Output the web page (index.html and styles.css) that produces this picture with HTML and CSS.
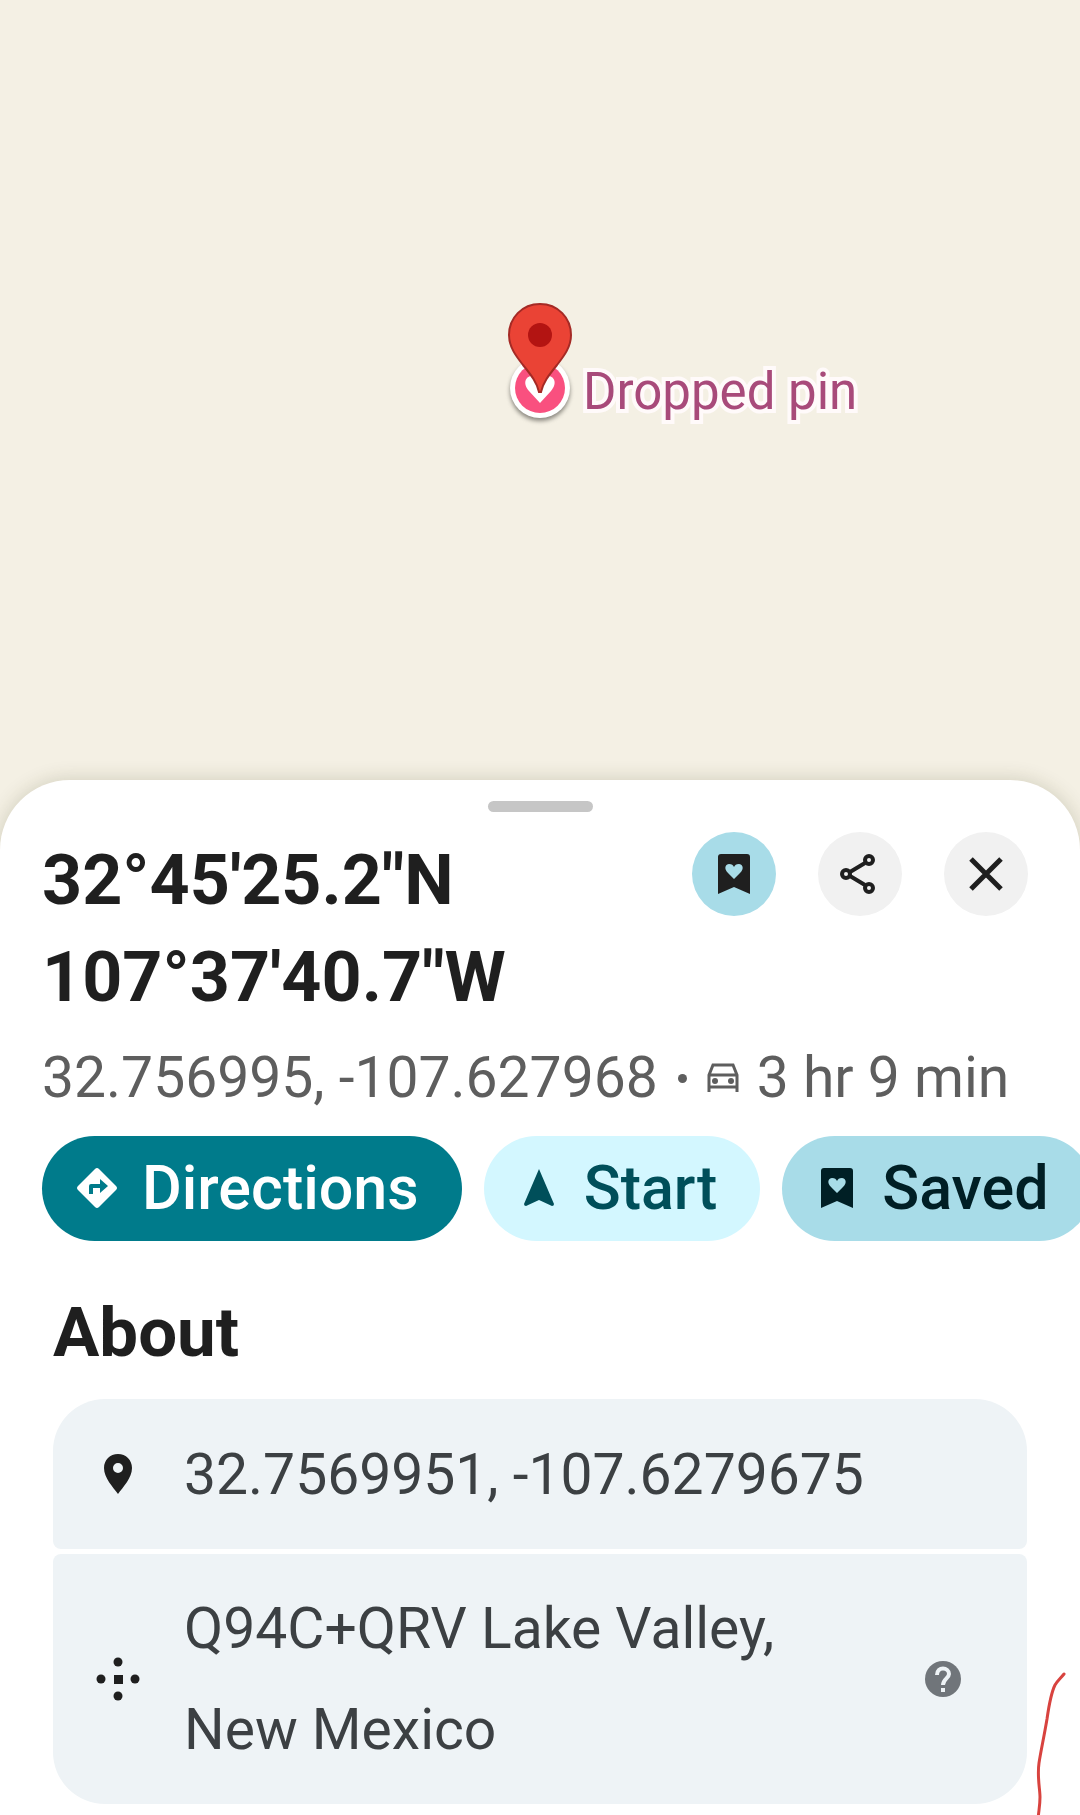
FILE: index.html
```html
<!DOCTYPE html>
<html lang="en">
<head>
    <meta charset="utf-8">
    <meta name="viewport" content="width=device-width, initial-scale=1">
    <title>Dropped pin</title>
    <link rel="stylesheet" href="styles.css">
</head>
<body>
    <div class="map">
        <div class="place">
            <svg class="marker" viewBox="0 0 80 140">
                <circle class="marker-shadow" cx="40" cy="91" r="30"/>
                <circle cx="40" cy="88" r="30" fill="#fff"/>
                <circle cx="40" cy="88" r="25" fill="#f9507f"/>
                <path d="M40 103 L29 91 C22 83 26 76 32 76 C36 76 39 79 40 81 C41 79 44 76 48 76 C54 76 58 83 51 91 Z" fill="#fff"/>
                <path d="M40 4 C22 4 9 18 9 35 C9 47 16 56 23 65 C32 76 37 83 39 92 H41 C43 83 48 76 57 65 C64 56 71 47 71 35 C71 18 58 4 40 4 Z" fill="#ea4335" stroke="#a52a25" stroke-width="2"/>
                <circle cx="40" cy="35" r="12" fill="#b31412"/>
            </svg>
            <span class="place-label">Dropped pin</span>
        </div>
    </div>

    <main class="sheet">
        <div class="handle"></div>
        <div class="header">
            <h1>32°45'25.2"N 107°37'40.7"W</h1>
            <div class="header-buttons">
                <button class="icon-button icon-saved" aria-label="Saved">
                    <svg viewBox="0 0 40 40"><path fill-rule="evenodd" d="M4 3 Q4 0 7 0 H33 Q36 0 36 3 V40 L20 33 L4 40 Z M20 25 L14 19 C9 14 12 10 15 10 C18 10 19 11 20 13 C21 11 22 10 25 10 C28 10 31 14 26 19 Z"/></svg>
                </button>
                <button class="icon-button" aria-label="Share">
                    <svg class="line" viewBox="0 0 40 40" stroke-width="4"><path d="M10 18 L25 9 M10 22 L25 31"/><circle cx="6" cy="20" r="4"/><circle cx="29" cy="6" r="4"/><circle cx="29" cy="34" r="4"/></svg>
                </button>
                <button class="icon-button" aria-label="Close">
                    <svg class="line" viewBox="0 0 40 40" stroke-width="5"><path d="M5 5 L35 35 M35 5 L5 35"/></svg>
                </button>
            </div>
        </div>
        <p class="summary">
            <span>32.756995, -107.627968</span>
            <span class="dot"></span>
            <svg class="car line" viewBox="0 0 32 30" stroke-width="3"><path d="M2 29 V12 L6 2 H26 L30 12 V29 M2 24 H30 M2 12 H30"/><circle cx="8" cy="18" r="3" fill="currentColor" stroke="none"/><circle cx="24" cy="18" r="3" fill="currentColor" stroke="none"/></svg>
            <span>3 hr 9 min</span>
        </p>
        <div class="actions">
            <button class="action directions">
                <svg viewBox="0 0 40 40"><path fill-rule="evenodd" d="M18 1 Q20 -1 22 1 L39 18 Q41 20 39 22 L22 39 Q20 41 18 39 L1 22 Q-1 20 1 18 Z M12 26 H16 V20 H23 V25 L31 18 L23 11 V16 H14 Q12 16 12 18 Z"/></svg>
                Directions
            </button>
            <button class="action start">
                <svg viewBox="0 0 40 40"><path d="M20 1 L35 36 Q35 38 33 38 L20 32 L7 38 Q5 38 5 36 Z"/></svg>
                Start
            </button>
            <button class="action saved">
                <svg viewBox="0 0 40 40"><path fill-rule="evenodd" d="M4 3 Q4 0 7 0 H33 Q36 0 36 3 V40 L20 33 L4 40 Z M20 25 L14 19 C9 14 12 10 15 10 C18 10 19 11 20 13 C21 11 22 10 25 10 C28 10 31 14 26 19 Z"/></svg>
                Saved
            </button>
        </div>

        <section class="about">
            <h2>About</h2>
            <div class="card">
                <svg class="card-icon" viewBox="0 0 44 44"><path fill-rule="evenodd" d="M22 2 C14 2 8 8 8 16 C8 26 17 35 22 42 C27 35 36 26 36 16 C36 8 30 2 22 2 Z M22 11 A5 5 0 1 1 22 21 A5 5 0 1 1 22 11 Z"/></svg>
                <span>32.7569951, -107.6279675</span>
            </div>
            <div class="card">
                <svg class="card-icon" viewBox="0 0 44 44"><rect x="18" y="18" width="9" height="9"/><circle cx="22" cy="5" r="4.5"/><circle cx="22" cy="39" r="4.5"/><circle cx="5" cy="22" r="4.5"/><circle cx="39" cy="22" r="4.5"/></svg>
                <span>Q94C+QRV Lake Valley, New Mexico</span>
                <button class="help" aria-label="About plus codes">
                    <svg viewBox="0 0 36 36"><circle cx="18" cy="18" r="18" fill="#70757a"/><path d="M12 14 C12 5 24 6 24 13 C24 17 18 18 18 24" fill="none" stroke="#eef3f6" stroke-width="4"/><rect x="16" y="27" width="4" height="4" fill="#eef3f6"/></svg>
                </button>
            </div>
        </section>

        <!-- hand-drawn pen mark -->
        <svg class="scribble line" viewBox="0 0 40 150" stroke-width="3" stroke-linecap="round"><path d="M32 9 C28 14 26 15 23 20 C19 28 17 40 15 54 C12 72 9 85 7 98 C5 112 8 124 8 132 C8 140 7 144 6 154"/></svg>
    </main>
</body>
</html>
```

FILE: styles.css
```css
* {
    box-sizing: border-box;
}
body {
    margin: 0;
    font-family: Roboto, "Noto Sans", sans-serif;
    background-color: #f4f0e4;
    color: #1f1f1f;
    overflow-x: hidden;
}
h1, h2, p {
    margin: 0;
}
button {
    border: none;
    padding: 0;
    font-family: inherit;
    color: inherit;
    cursor: pointer;
}
svg {
    display: block;
    fill: currentColor;
    flex-shrink: 0;
}
.line {
    fill: none;
    stroke: currentColor;
}
.map {
    height: 780px;
    padding-top: 300px;
}
.place {
    display: flex;
    align-items: flex-start;
    margin-left: calc(50% - 40px);
}
.marker {
    width: 80px;
    height: 140px;
}
.marker-shadow {
    fill: #8a877f;
    filter: blur(2px);
}
.place-label {
    padding-top: 62px;
    margin-left: 3px;
    font-size: 51px;
    line-height: 60px;
    color: #a84a7a;
    -webkit-text-stroke: 8px #fffafa;
    paint-order: stroke fill;
}
.sheet {
    position: relative;
    padding: 21px 0 11px;
    background-color: #fff;
    border-radius: 70px 70px 0 0;
    box-shadow: 0 0 20px rgba(60, 60, 20, 0.2);
    overflow: hidden;
}
.handle {
    width: 105px;
    height: 11px;
    margin: 0 auto;
    border-radius: 6px;
    background-color: #c6c6c6;
}
.header {
    display: flex;
    justify-content: space-between;
    align-items: flex-start;
    padding: 20px 52px 0 42px;
}
h1 {
    width: 500px;
    font-size: 70px;
    font-weight: 700;
    line-height: 97px;
}
.header-buttons {
    display: flex;
    gap: 42px;
}
.icon-button {
    display: flex;
    align-items: center;
    justify-content: center;
    width: 84px;
    height: 84px;
    border-radius: 50%;
    background-color: #f1f1f1;
}
.icon-button svg {
    width: 40px;
    height: 40px;
}
.icon-saved {
    background-color: #a8dce8;
}
.summary {
    display: flex;
    align-items: center;
    padding: 12px 42px 0;
    font-size: 57px;
    line-height: 80px;
    color: #5e5e5e;
    white-space: nowrap;
}
.dot {
    width: 9px;
    height: 9px;
    margin: 0 20px;
    border-radius: 50%;
    background-color: #5e5e5e;
}
.car {
    width: 32px;
    height: 30px;
    margin-right: 18px;
}
.actions {
    display: flex;
    gap: 22px;
    padding: 18px 0 0 42px;
    overflow: hidden;
}
.action {
    display: flex;
    align-items: center;
    flex-shrink: 0;
    gap: 25px;
    height: 105px;
    padding: 0 43px 2px 35px;
    border-radius: 53px;
    font-size: 61px;
    font-weight: 500;
    white-space: nowrap;
}
.action svg {
    width: 40px;
    height: 40px;
}
.directions {
    background-color: #007b8b;
    color: #fff;
}
.start {
    background-color: #d3f7ff;
    color: #004f5a;
}
.saved {
    background-color: #a8dce8;
    color: #001f25;
}
.about {
    padding: 52px 53px 0;
}
h2 {
    font-size: 69px;
    font-weight: 700;
    line-height: 80px;
    margin-bottom: 26px;
}
.card {
    display: flex;
    align-items: center;
    min-height: 150px;
    padding: 24px 66px 24px 43px;
    border-radius: 8px;
    background-color: #eef3f6;
    color: #3c4043;
    font-size: 57px;
    line-height: 101px;
}
.card:first-of-type {
    border-radius: 52px 52px 8px 8px;
    margin-bottom: 5px;
}
.card:last-of-type {
    border-radius: 8px 8px 52px 52px;
}
.card span {
    flex: 1;
}
.card-icon {
    width: 44px;
    height: 44px;
    margin-right: 44px;
    color: #1f1f1f;
}
.help {
    width: 36px;
    height: 36px;
    margin-left: 80px;
    background: none;
}
.scribble {
    position: absolute;
    right: 8px;
    bottom: 0;
    width: 40px;
    height: 150px;
    color: #d8433f;
}
```
